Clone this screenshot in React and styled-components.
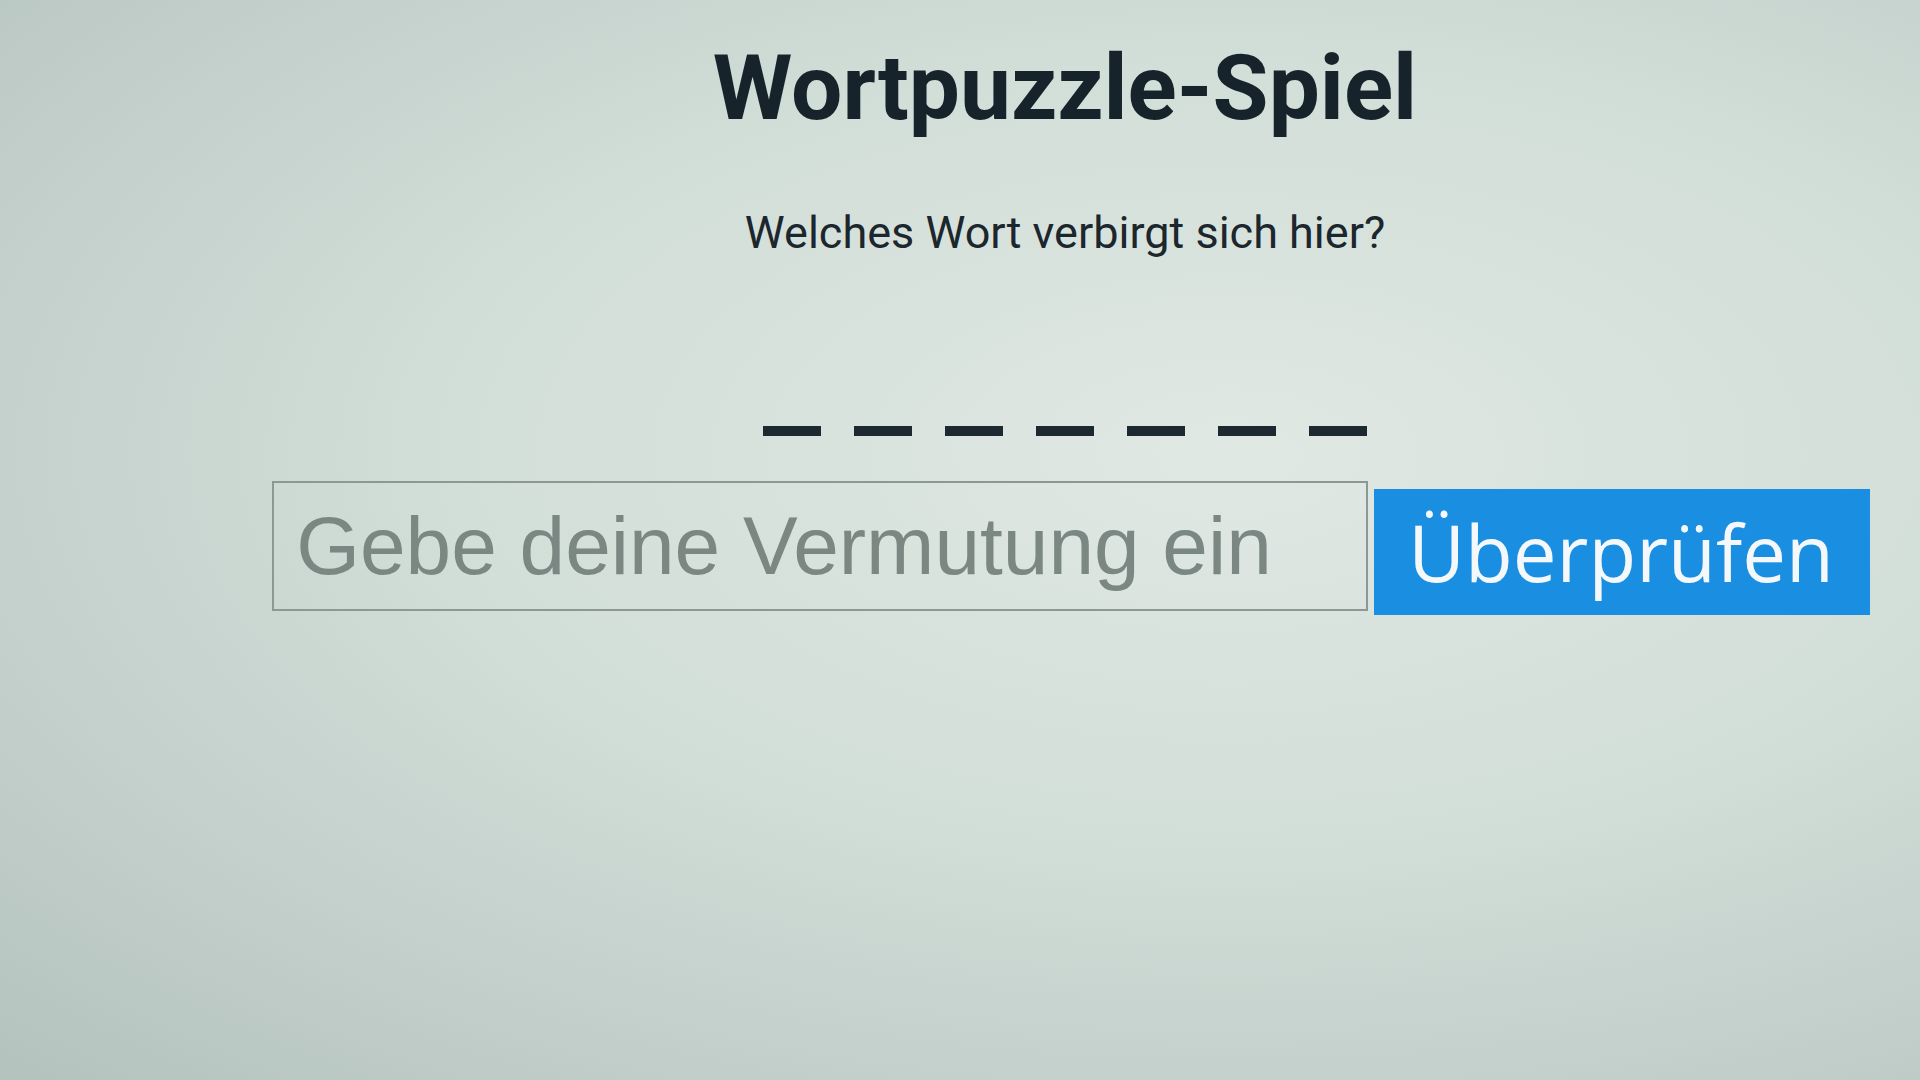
import React from 'react'
import styled, { createGlobalStyle } from 'styled-components'

const GlobalStyle = createGlobalStyle`
  html, body {
    margin: 0;
    padding: 0;
  }
  body {
    min-height: 100vh;
    background: radial-gradient(ellipse 90% 80% at 64% 42%, #e0e8e4 0%, #d2ded8 45%, #b5c3bf 100%);
    font-family: Roboto, "Noto Sans", sans-serif;
  }
`

const Page = styled.main`
  min-height: 100vh;
  box-sizing: border-box;
  padding: 34px 0 0 210px;
  display: flex;
  flex-direction: column;
  align-items: center;
`

const Title = styled.h1`
  margin: 0;
  font-family: Roboto, sans-serif;
  font-weight: 700;
  font-size: 91px;
  line-height: 1.2;
  color: #17232b;
`

const Question = styled.p`
  margin: 63px 0 0;
  font-family: Roboto, sans-serif;
  font-weight: 400;
  font-size: 45px;
  line-height: 1.2;
  color: #1c262d;
`

const Blanks = styled.div`
  margin-top: 166px;
  display: flex;
  gap: 33px;
`

const Blank = styled.span`
  width: 58px;
  height: 10px;
  background: #1d2930;
`

const GuessRow = styled.form`
  margin: 45px 0 0 12px;
  display: flex;
  align-items: flex-end;
  gap: 6px;
`

const GuessInput = styled.input`
  box-sizing: border-box;
  width: 1096px;
  height: 130px;
  padding: 0 22px;
  border: 2px solid #8d9893;
  background: transparent;
  font-family: "Liberation Sans", Arial, sans-serif;
  font-size: 82px;
  color: #333;
  outline: none;

  &::placeholder {
    color: #7b8782;
  }
`

const CheckButton = styled.button`
  box-sizing: border-box;
  height: 126px;
  margin-bottom: -4px;
  padding: 0 36px 0 34px;
  border: none;
  background: #1a8fe2;
  color: #f4f8fb;
  font-family: "Open Sans", "Noto Sans", sans-serif;
  font-size: 78px;
  cursor: pointer;
`

export default function App() {
  const letters = 7
  return (
    <>
      <GlobalStyle />
      <Page>
        <Title>Wortpuzzle-Spiel</Title>
        <Question>Welches Wort verbirgt sich hier?</Question>
        <Blanks>
          {Array.from({ length: letters }).map((_, i) => (
            <Blank key={i} />
          ))}
        </Blanks>
        <GuessRow onSubmit={(e) => e.preventDefault()}>
          <GuessInput placeholder="Gebe deine Vermutung ein" />
          <CheckButton type="submit">Überprüfen</CheckButton>
        </GuessRow>
      </Page>
    </>
  )
}
